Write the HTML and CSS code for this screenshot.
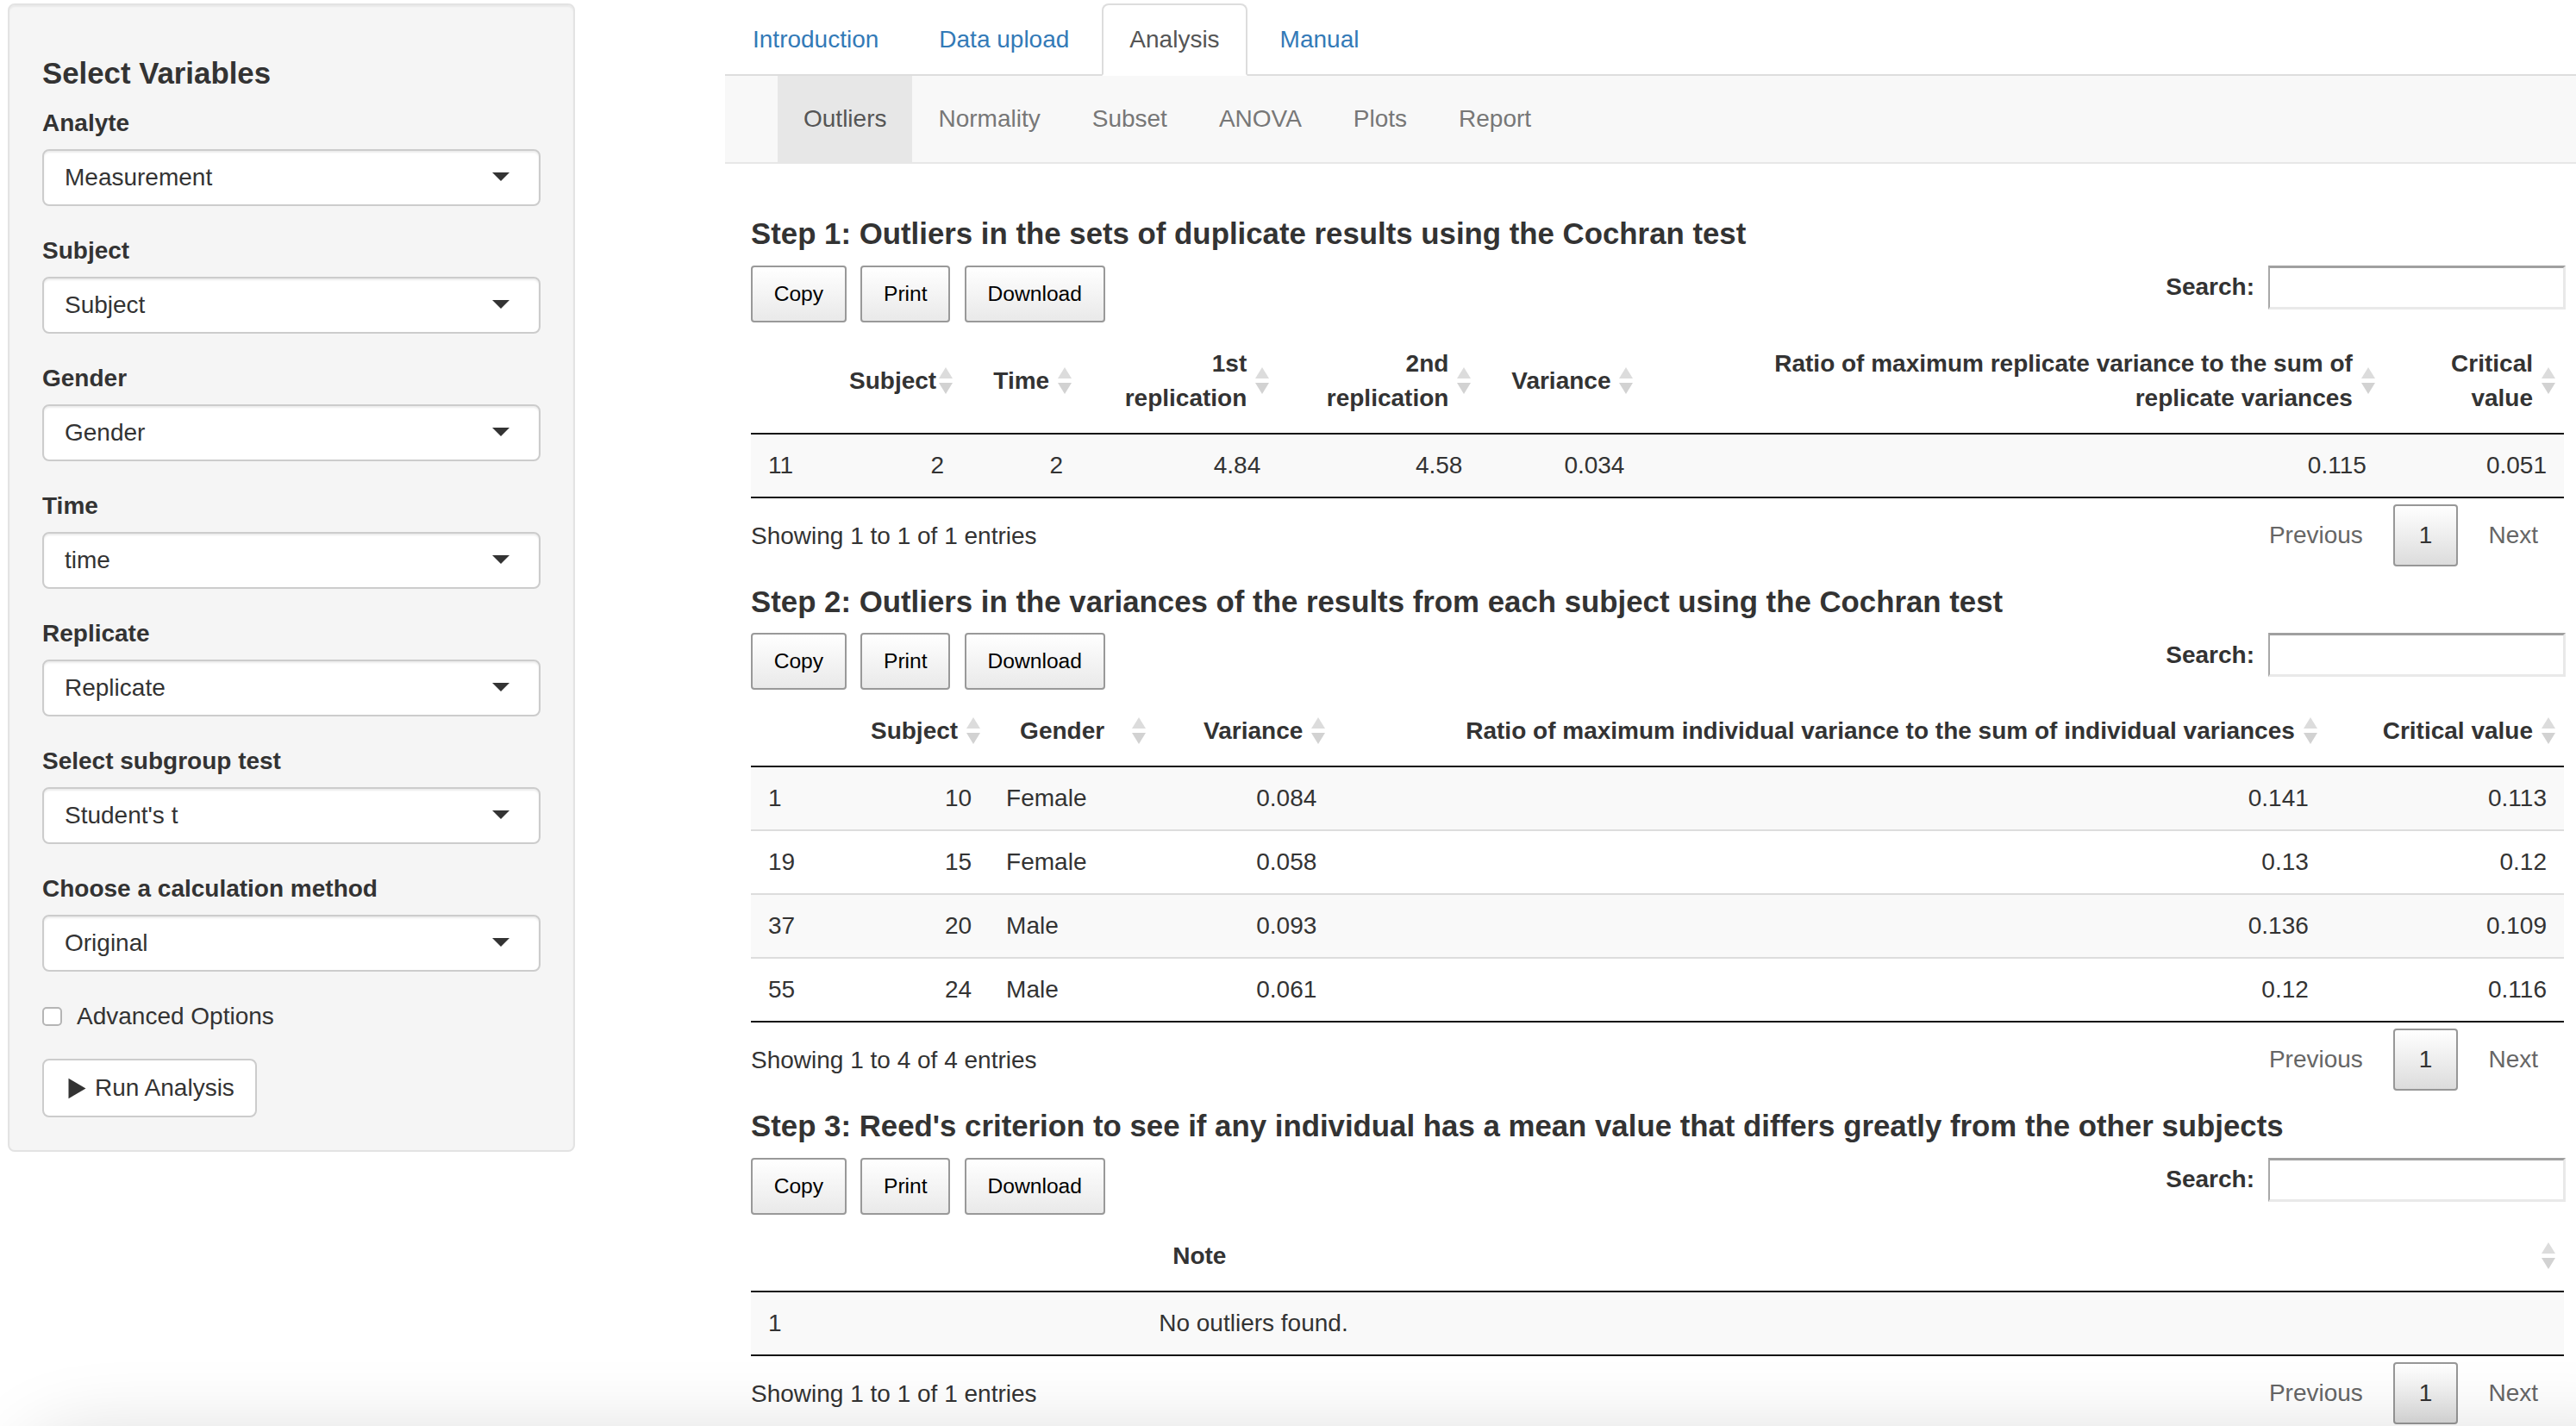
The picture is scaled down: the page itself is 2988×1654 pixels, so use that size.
FILE: index.html
```html
<!DOCTYPE html>
<html lang="en">
<head>
<meta charset="utf-8">
<title>Analysis</title>
<link rel="stylesheet" href="styles.css">
</head>
<body>
<div class="page">
  <aside class="sidebar">
    <div class="well">
      <h4 class="well-title">Select Variables</h4>
      <div class="form-group"><label>Analyte</label><div class="select"><span>Measurement</span><span class="caret"></span></div></div>
      <div class="form-group"><label>Subject</label><div class="select"><span>Subject</span><span class="caret"></span></div></div>
      <div class="form-group"><label>Gender</label><div class="select"><span>Gender</span><span class="caret"></span></div></div>
      <div class="form-group"><label>Time</label><div class="select"><span>time</span><span class="caret"></span></div></div>
      <div class="form-group"><label>Replicate</label><div class="select"><span>Replicate</span><span class="caret"></span></div></div>
      <div class="form-group"><label>Select subgroup test</label><div class="select"><span>Student's t</span><span class="caret"></span></div></div>
      <div class="form-group"><label>Choose a calculation method</label><div class="select"><span>Original</span><span class="caret"></span></div></div>
      <div class="checkbox"><span class="cb"></span><span>Advanced Options</span></div>
      <button class="run-btn" type="button"><svg class="play" viewBox="0 0 21 25" width="21" height="25"><path d="M0.5 0.8 L20.5 12.5 L0.5 24.2 Z" fill="#333"/></svg>Run Analysis</button>
    </div>
  </aside>

  <main class="main">
    <ul class="nav-tabs">
      <li><a>Introduction</a></li>
      <li><a>Data upload</a></li>
      <li class="active"><a>Analysis</a></li>
      <li><a>Manual</a></li>
    </ul>
    <nav class="subnav">
      <ul>
        <li class="active"><a>Outliers</a></li>
        <li><a>Normality</a></li>
        <li><a>Subset</a></li>
        <li><a>ANOVA</a></li>
        <li><a>Plots</a></li>
        <li><a>Report</a></li>
      </ul>
    </nav>

    <div class="tab-content">
      <section class="step">
        <h4 class="step-title">Step 1: Outliers in the sets of duplicate results using the Cochran test</h4>
        <div class="dt-top">
          <div class="dt-buttons"><button class="dt-button">Copy</button><button class="dt-button">Print</button><button class="dt-button">Download</button></div>
          <label class="dt-filter">Search:<input type="search"></label>
        </div>
        <table class="dt">
          <colgroup><col class="t1c0"><col class="t1c1"><col class="t1c2"><col class="t1c3"><col class="t1c4"><col class="t1c5"><col class="t1c6"><col class="t1c7"></colgroup>
          <thead>
            <tr>
              <th></th>
              <th class="r sorting">Subject</th>
              <th class="r sorting">Time</th>
              <th class="r sorting">1st<br>replication</th>
              <th class="r sorting">2nd<br>replication</th>
              <th class="r sorting">Variance</th>
              <th class="r sorting">Ratio of maximum replicate variance to the sum of<br>replicate variances</th>
              <th class="r sorting">Critical<br>value</th>
            </tr>
          </thead>
          <tbody>
            <tr><td>11</td><td class="r">2</td><td class="r">2</td><td class="r">4.84</td><td class="r">4.58</td><td class="r">0.034</td><td class="r">0.115</td><td class="r">0.051</td></tr>
          </tbody>
        </table>
        <div class="dt-bottom">
          <div class="dt-info">Showing 1 to 1 of 1 entries</div>
          <div class="dt-paginate"><a class="pg">Previous</a><a class="pg current">1</a><a class="pg">Next</a></div>
        </div>
      </section>

      <section class="step">
        <h4 class="step-title">Step 2: Outliers in the variances of the results from each subject using the Cochran test</h4>
        <div class="dt-top">
          <div class="dt-buttons"><button class="dt-button">Copy</button><button class="dt-button">Print</button><button class="dt-button">Download</button></div>
          <label class="dt-filter">Search:<input type="search"></label>
        </div>
        <table class="dt">
          <colgroup><col class="t2c0"><col class="t2c1"><col class="t2c2"><col class="t2c3"><col class="t2c4"><col class="t2c5"></colgroup>
          <thead>
            <tr>
              <th></th>
              <th class="r sorting">Subject</th>
              <th class="sorting">Gender</th>
              <th class="r sorting">Variance</th>
              <th class="r sorting">Ratio of maximum individual variance to the sum of individual variances</th>
              <th class="r sorting">Critical value</th>
            </tr>
          </thead>
          <tbody>
            <tr><td>1</td><td class="r">10</td><td>Female</td><td class="r">0.084</td><td class="r">0.141</td><td class="r">0.113</td></tr>
            <tr><td>19</td><td class="r">15</td><td>Female</td><td class="r">0.058</td><td class="r">0.13</td><td class="r">0.12</td></tr>
            <tr><td>37</td><td class="r">20</td><td>Male</td><td class="r">0.093</td><td class="r">0.136</td><td class="r">0.109</td></tr>
            <tr><td>55</td><td class="r">24</td><td>Male</td><td class="r">0.061</td><td class="r">0.12</td><td class="r">0.116</td></tr>
          </tbody>
        </table>
        <div class="dt-bottom">
          <div class="dt-info">Showing 1 to 4 of 4 entries</div>
          <div class="dt-paginate"><a class="pg">Previous</a><a class="pg current">1</a><a class="pg">Next</a></div>
        </div>
      </section>

      <section class="step">
        <h4 class="step-title">Step 3: Reed's criterion to see if any individual has a mean value that differs greatly from the other subjects</h4>
        <div class="dt-top">
          <div class="dt-buttons"><button class="dt-button">Copy</button><button class="dt-button">Print</button><button class="dt-button">Download</button></div>
          <label class="dt-filter">Search:<input type="search"></label>
        </div>
        <table class="dt">
          <colgroup><col class="t3c0"><col class="t3c1"></colgroup>
          <thead>
            <tr><th></th><th class="sorting">Note</th></tr>
          </thead>
          <tbody>
            <tr><td>1</td><td>No outliers found.</td></tr>
          </tbody>
        </table>
        <div class="dt-bottom">
          <div class="dt-info">Showing 1 to 1 of 1 entries</div>
          <div class="dt-paginate"><a class="pg">Previous</a><a class="pg current">1</a><a class="pg">Next</a></div>
        </div>
      </section>
    </div>
  </main>
</div>
<div class="shade"></div>
</body>
</html>
```

FILE: styles.css
```css
html, body {
  margin: 0;
  padding: 0;
  height: 1654px;
  overflow: hidden;
  background: #fff;
}

body {
  font-family: "Liberation Sans", Arial, Helvetica, sans-serif;
  font-size: 28px;
  line-height: 40px;
  color: #333;
}

.page {
  display: flex;
  align-items: flex-start;
  padding-top: 4px;
  width: 3004px;
}

/* ---------- sidebar ---------- */
.sidebar {
  flex: 0 0 658px;
  margin-left: 9px;
}

.well {
  background: #f5f5f5;
  border: 2px solid #e3e3e3;
  border-radius: 8px;
  padding: 38px;
  box-shadow: inset 0 2px 2px rgba(0, 0, 0, 0.05);
}

.well-title {
  font-size: 34.8px;
  line-height: 40px;
  font-weight: bold;
  margin: 21px 0 18px;
  color: #333;
}

.form-group {
  margin-bottom: 32px;
}

.form-group label {
  display: block;
  font-weight: bold;
  margin-bottom: 10px;
}

.select {
  display: flex;
  align-items: center;
  height: 66px;
  box-sizing: border-box;
  border: 2px solid #ccc;
  border-radius: 8px;
  background: #fff;
  padding: 0 24px;
  box-shadow: inset 0 2px 2px rgba(0, 0, 0, 0.075);
  color: #333;
}

.caret {
  width: 0;
  height: 0;
  border-left: 10px solid transparent;
  border-right: 10px solid transparent;
  border-top: 10px solid #333;
  margin-left: auto;
  margin-right: 10px;
  margin-top: -3px;
}

.checkbox {
  display: flex;
  align-items: center;
  margin-bottom: 29px;
}

.cb {
  width: 23px;
  height: 22px;
  box-sizing: border-box;
  border: 2px solid #b5b5b5;
  border-radius: 5px;
  background: #fff;
  margin-right: 17px;
}

.run-btn {
  display: flex;
  align-items: center;
  height: 68px;
  box-sizing: border-box;
  padding: 0 24px;
  border: 2px solid #ccc;
  border-radius: 8px;
  background: #fff;
  font-family: inherit;
  font-size: 28px;
  line-height: 40px;
  color: #333;
}

.play {
  margin-left: 4px;
  margin-right: 10px;
}

/* ---------- main ---------- */
.main {
  flex: 0 0 2163px;
  margin-left: 174px;
}

.nav-tabs {
  list-style: none;
  margin: 0;
  padding: 0;
  display: flex;
  border-bottom: 2px solid #ddd;
}

.nav-tabs li {
  margin-bottom: -2px;
}

.nav-tabs a {
  display: block;
  padding: 20px 30px;
  margin-right: 6px;
  border: 2px solid transparent;
  border-radius: 8px 8px 0 0;
  color: #337ab7;
  line-height: 40px;
}

.nav-tabs li.active a {
  color: #555;
  background: #fff;
  border-color: #ddd #ddd transparent;
}

.subnav {
  background: #f8f8f8;
  border-bottom: 2px solid #e7e7e7;
  height: 100px;
  padding-left: 61px;
}

.subnav ul {
  list-style: none;
  margin: 0;
  padding: 0;
  display: flex;
}

.subnav a {
  display: block;
  padding: 30px 30px;
  line-height: 40px;
  color: #777;
}

.subnav li.active a {
  background: #e7e7e7;
  color: #555;
}

.tab-content {
  padding: 40px 30px 0;
}

.step-title {
  font-size: 34.8px;
  line-height: 40px;
  font-weight: bold;
  margin: 21px 0 16.5px;
  color: #333;
}

.dt-top {
  display: flex;
  justify-content: space-between;
  align-items: flex-start;
  height: 66px;
}

.dt-buttons {
  display: flex;
  gap: 16.6px;
}

.dt-button {
  font-family: inherit;
  font-size: 24.64px;
  line-height: 37.4px;
  padding: 12.3px 24.64px;
  border: 2px solid #999;
  border-radius: 4px;
  background: linear-gradient(to bottom, #fff 0%, #e9e9e9 100%);
  color: #000;
}

.dt-filter {
  display: flex;
  align-items: center;
  font-weight: bold;
  height: 51px;
  margin-right: -2px;
}

.dt-filter input {
  width: 345px;
  height: 51px;
  box-sizing: border-box;
  margin: 0 0 0 16px;
  padding: 0 8px;
  border-style: solid;
  border-width: 3px 3px 3px 2px;
  border-color: #a0a0a0 #e9e9e9 #e9e9e9 #a8a8a8;
  background: #fff;
  font: inherit;
}

table.dt {
  width: 100%;
  table-layout: fixed;
  border-collapse: separate;
  border-spacing: 0;
  margin-top: 8px;
  border-bottom: 2px solid #111;
}

.dt th {
  position: relative;
  padding: 20px 36px;
  font-weight: bold;
  text-align: left;
  vertical-align: middle;
  border-bottom: 2px solid #111;
  line-height: 40px;
  color: #333;
}

.dt td {
  padding: 16px 20px;
  border-top: 2px solid #ddd;
  line-height: 40px;
  white-space: nowrap;
}

.dt tbody tr:first-child td {
  border-top: none;
}

.dt tbody tr:nth-child(odd) {
  background: #f9f9f9;
}

.dt .r {
  text-align: right;
}

.dt th.sorting::before,
.dt th.sorting::after {
  content: "";
  position: absolute;
  right: 10px;
  top: 50%;
  width: 0;
  height: 0;
  border-left: 8px solid transparent;
  border-right: 8px solid transparent;
}

.dt th.sorting::before {
  margin-top: -16px;
  border-bottom: 13px solid #dcdcdc;
}

.dt th.sorting::after {
  margin-top: 2px;
  border-top: 13px solid #d2d2d2;
}

/* column widths, table 1 */
.t1c0 { width: 78px; }
.t1c1 { width: 166px; }
.t1c2 { width: 138px; }
.t1c3 { width: 229px; }
.t1c4 { width: 234px; }
.t1c5 { width: 188px; }
.t1c6 { width: 860px; }
.t1c7 { width: 209px; }

/* column widths, table 2 */
.t2c0 { width: 90px; }
.t2c1 { width: 186px; }
.t2c2 { width: 192px; }
.t2c3 { width: 208px; }
.t2c4 { width: 1150px; }
.t2c5 { width: 276px; }

/* column widths, table 3 */
.t3c0 { width: 453px; }
.t3c1 { width: 1649px; }

.dt-bottom {
  display: flex;
  justify-content: space-between;
  align-items: flex-start;
}

.dt-info {
  padding-top: 24px;
  color: #333;
}

.dt-paginate {
  display: flex;
  gap: 5px;
  padding-top: 7px;
}

.pg {
  display: block;
  padding: 14px 28px;
  line-height: 40px;
  border: 2px solid transparent;
  border-radius: 4px;
  color: #666;
}

.pg.current {
  border-color: #979797;
  background: linear-gradient(to bottom, #fff 0%, #dcdcdc 100%);
  color: #333;
}

.shade {
  position: fixed;
  left: 40px;
  right: -100px;
  top: 1684px;
  height: 200px;
  border-radius: 60px;
  box-shadow: 0 0 90px 20px rgba(0, 0, 0, 0.15);
  pointer-events: none;
}
```
